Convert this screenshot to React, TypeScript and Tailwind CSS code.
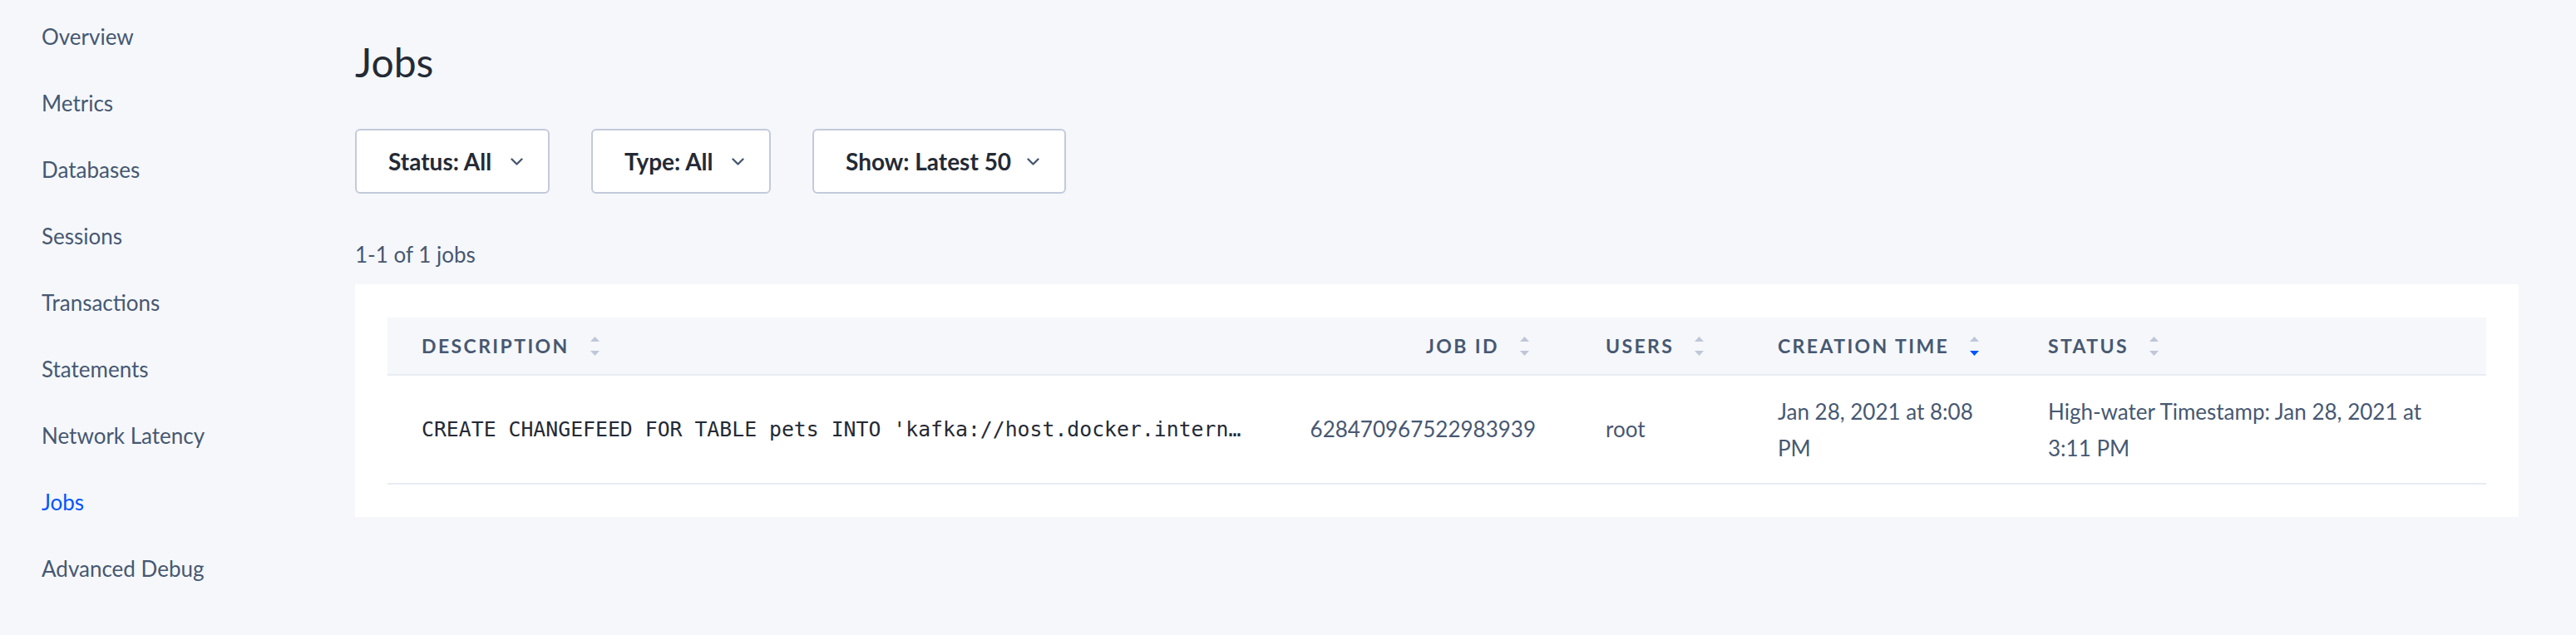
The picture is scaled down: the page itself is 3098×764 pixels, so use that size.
import React from "react";

const navItems = [
  "Overview",
  "Metrics",
  "Databases",
  "Sessions",
  "Transactions",
  "Statements",
  "Network Latency",
  "Jobs",
  "Advanced Debug",
];

function Chevron() {
  return (
    <svg width="15" height="9" viewBox="0 0 15 9" fill="none">
      <polyline points="1.5,1.5 7.5,7.5 13.5,1.5" stroke="#475872" strokeWidth="2.4" strokeLinecap="round" strokeLinejoin="round" />
    </svg>
  );
}

function SortIcon({ active = false }: { active?: boolean }) {
  return (
    <svg width="11" height="23" viewBox="0 0 11 23" className="shrink-0">
      <polygon points="0,6 5.5,0 11,6" fill="#c0c6d9" />
      <polygon points="0,17 11,17 5.5,23" fill={active ? "#0055ff" : "#c0c6d9"} />
    </svg>
  );
}

function Dropdown({ label, width }: { label: string; width: string }) {
  return (
    <div
      className={`flex h-[78px] items-center justify-between rounded-[6px] border-2 border-[#c3cadb] bg-white pl-[38px] pr-[30px] ${width}`}
    >
      <span className="text-[28px] font-bold text-[#242a35]">{label}</span>
      <Chevron />
    </div>
  );
}

function HeaderCell({ label, active = false }: { label: string; active?: boolean }) {
  return (
    <div className="flex items-center gap-[25px]">
      <span className="text-[23px] font-bold uppercase tracking-[2.4px] text-[#475872]">{label}</span>
      <SortIcon active={active} />
    </div>
  );
}

export default function App() {
  return (
    <div
      className="flex min-h-[764px] w-[3098px] bg-[#f5f7fa]"
      style={{ fontFamily: "Lato, 'Noto Sans', sans-serif" }}
    >
      <nav className="w-[427px] shrink-0 pl-[50px] pt-[4px]">
        {navItems.map((item) => (
          <div
            key={item}
            className={`flex h-[80px] items-center text-[26px] ${
              item === "Jobs" ? "text-[#0055ff]" : "text-[#475872]"
            }`}
          >
            {item}
          </div>
        ))}
      </nav>

      <main className="flex-1 pr-[69px]">
        <h1 className="mt-[46px] text-[48px] leading-[58px] font-normal text-[#242a35]">Jobs</h1>

        <div className="mt-[51px] flex gap-[50px]">
          <Dropdown label="Status: All" width="w-[234px]" />
          <Dropdown label="Type: All" width="w-[216px]" />
          <Dropdown label="Show: Latest 50" width="w-[305px]" />
        </div>

        <div className="mt-[57px] text-[26px] leading-[32px] text-[#475872]">1-1 of 1 jobs</div>

        <div className="mt-[20px] bg-white px-[39px] pb-[39px] pt-[40px]">
          <div className="grid grid-cols-[1080px_345px_207px_325px_1fr]">
            {/* header */}
            <div className="flex h-[70px] items-center border-b-2 border-[#e7ecf3] bg-[#f5f7fa] pl-[41px]">
              <HeaderCell label="Description" />
            </div>
            <div className="flex h-[70px] items-center justify-end border-b-2 border-[#e7ecf3] bg-[#f5f7fa] pr-[52px]">
              <HeaderCell label="Job ID" />
            </div>
            <div className="flex h-[70px] items-center border-b-2 border-[#e7ecf3] bg-[#f5f7fa] pl-[40px]">
              <HeaderCell label="Users" />
            </div>
            <div className="flex h-[70px] items-center border-b-2 border-[#e7ecf3] bg-[#f5f7fa] pl-[40px]">
              <HeaderCell label="Creation Time" active />
            </div>
            <div className="flex h-[70px] items-center border-b-2 border-[#e7ecf3] bg-[#f5f7fa] pl-[40px]">
              <HeaderCell label="Status" />
            </div>

            {/* row */}
            <div className="flex h-[131px] items-center border-b-2 border-[#e7ecf3] pl-[41px]">
              <span
                className="whitespace-nowrap text-[24.8px] text-[#242a35]"
                style={{ fontFamily: "'DejaVu Sans Mono', 'Liberation Mono', monospace" }}
              >
                CREATE CHANGEFEED FOR TABLE pets INTO 'kafka://host.docker.intern…
              </span>
            </div>
            <div className="flex h-[131px] items-center justify-end border-b-2 border-[#e7ecf3] pr-[44px]">
              <span className="text-[26px] text-[#475872]">628470967522983939</span>
            </div>
            <div className="flex h-[131px] items-center border-b-2 border-[#e7ecf3] pl-[40px]">
              <span className="text-[26px] text-[#475872]">root</span>
            </div>
            <div className="flex h-[131px] items-center border-b-2 border-[#e7ecf3] pl-[40px]">
              <span className="text-[26px] leading-[44px] text-[#475872]">
                Jan 28, 2021 at 8:08
                <br />
                PM
              </span>
            </div>
            <div className="flex h-[131px] items-center border-b-2 border-[#e7ecf3] pl-[40px]">
              <span className="text-[26px] leading-[44px] text-[#475872]">
                High-water Timestamp: Jan 28, 2021 at
                <br />
                3:11 PM
              </span>
            </div>
          </div>
        </div>
      </main>
    </div>
  );
}
